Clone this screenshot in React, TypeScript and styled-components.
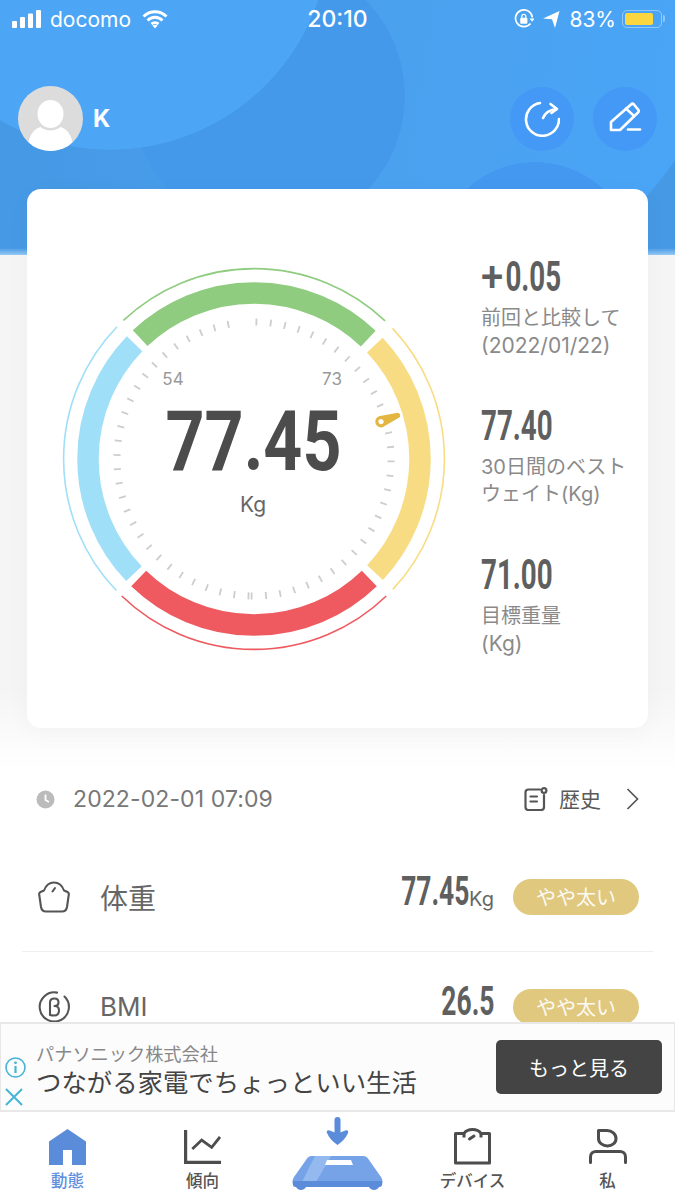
import styled, { createGlobalStyle } from "styled-components";

const GlobalStyle = createGlobalStyle`
  html, body {
    margin: 0;
    padding: 0;
    background: #fff;
    font-family: Inter, "Noto Sans CJK JP", sans-serif;
  }
`;

const CJK = `Inter, "Noto Sans CJK JP", sans-serif`;

const Screen = styled.div`
  width: 675px;
  height: 1200px;
  display: flex;
  flex-direction: column;
  overflow: hidden;
  background: #fff;
`;

const Main = styled.main`
  flex: 1;
  min-height: 0;
  background: linear-gradient(#f5f5f5 0, #f5f5f5 690px, #fff 770px);
`;

const Header = styled.header`
  height: 255px;
  background:
    linear-gradient(to bottom, rgba(170, 215, 250, 0) 248px, rgba(170, 215, 250, 0.8) 255px),
    radial-gradient(circle 220px at 110px -70px, #4ca6f5 99.7%, rgba(76, 166, 245, 0) 100%),
    radial-gradient(circle 137px at 268px 96px, #4499eb 99.7%, rgba(68, 153, 235, 0) 100%),
    radial-gradient(circle 100px at 535px 262px, #4498f0 99.7%, rgba(68, 152, 240, 0) 100%),
    radial-gradient(circle 385px at 360px -60px, rgba(70, 153, 228, 0) 99.7%, #4699e4 100%),
    linear-gradient(100deg, #4597e3 0%, #4aa1ee 55%, #4aa5f7 100%);
`;

const StatusBar = styled.div`
  height: 38px;
  display: grid;
  grid-template-columns: 1fr auto 1fr;
  align-items: center;
  padding: 0 12px;
  color: #fff;
  font-size: 21px;
`;

const StatusLeft = styled.div`
  display: flex;
  align-items: center;
  gap: 8px;
`;

const WifiSlot = styled.div`
  margin-left: 3px;
  display: flex;
`;

const StatusRight = styled.div`
  display: flex;
  align-items: center;
  justify-content: flex-end;
  gap: 9px;
`;

const Clock = styled.div`
  font-size: 23px;
  font-weight: 500;
`;

const Battery = styled.div`
  position: relative;
  width: 40px;
  height: 18px;
  box-sizing: border-box;
  border: 1.5px solid rgba(255, 255, 255, 0.4);
  border-radius: 5px;
  padding: 2px;
  margin: 0 1px 0 -3px;
  display: flex;

  &::after {
    content: "";
    position: absolute;
    right: -4px;
    top: 4px;
    width: 2px;
    height: 7px;
    border-radius: 0 2px 2px 0;
    background: rgba(255, 255, 255, 0.4);
  }
`;

const BatteryFill = styled.div`
  flex: 0 0 83%;
  background: #fbd63f;
  border-radius: 2px;
`;

const UserRow = styled.div`
  display: flex;
  align-items: center;
  margin-top: 48px;
  padding: 0 18px;
`;

const Avatar = styled.div`
  width: 65px;
  height: 65px;
  border-radius: 50%;
  background: #dcdcdc;
  overflow: hidden;
  flex: none;
`;

const UserName = styled.div`
  margin-left: 10px;
  flex: 1;
  color: #fff;
  font-size: 24px;
  font-weight: 700;
`;

const RoundButton = styled.div`
  width: 64px;
  height: 64px;
  border-radius: 50%;
  background: #4499f7;
  display: flex;
  align-items: center;
  justify-content: center;
  margin-left: 19px;
`;

const Card = styled.section`
  position: relative;
  width: 621px;
  height: 539px;
  box-sizing: border-box;
  margin: -66px 0 0 27px;
  padding: 70px 0 0 27px;
  background: #fff;
  border-radius: 14px;
  box-shadow: 0 6px 26px rgba(0, 0, 0, 0.03);
  display: flex;
`;

const GaugeSvg = styled.svg`
  width: 400px;
  height: 400px;
  flex: none;
  font-family: ${CJK};
`;

const GaugeValue = styled.text`
  font-family: Roboto, sans-serif;
  font-size: 84px;
  font-weight: 700;
  fill: #4c4c4c;
`;

const GaugeLabel = styled.text`
  font-size: 17px;
  fill: #999;
`;

const GaugeUnit = styled.text`
  font-size: 21px;
  fill: #666;
`;

const Stats = styled.div`
  margin-left: 27px;
  margin-top: -1px;
  display: flex;
  flex-direction: column;
  gap: 48px;
`;

const Stat = styled.div`
  display: flex;
  flex-direction: column;
`;

const StatValue = styled.div`
  height: 38px;
  line-height: 38px;
  font-family: Roboto, sans-serif;
  font-size: 42px;
  font-weight: 700;
  color: #5f5f5f;
  white-space: nowrap;
  transform: scaleX(0.66);
  transform-origin: left center;
`;

const PlusSign = styled.span`
  display: inline-block;
  width: 37px;
  font-weight: 500;
  transform: scaleX(1.45);
  transform-origin: left center;
`;

const StatCaption = styled.div`
  margin-top: 9px;
  display: flex;
  flex-direction: column;
`;

const CaptionLine = styled.div<{ $latin?: boolean }>`
  height: 27px;
  line-height: 27px;
  font-size: ${(p) => (p.$latin ? 21 : 20)}px;
  color: #8a8a8a;
  white-space: nowrap;
`;

const HistoryRow = styled.div`
  display: flex;
  align-items: center;
  height: 50px;
  margin-top: 46px;
  padding: 0 36px;
  font-size: 23px;
  letter-spacing: 0.1px;
  color: #777;
`;

const HistoryDate = styled.div`
  margin-left: 18px;
  flex: 1;
`;

const HistoryLink = styled.div`
  display: flex;
  align-items: center;
  color: #5a5a5a;
  font-size: 21px;
  letter-spacing: 0;
  gap: 11px;
`;

const HistoryLabel = styled.span`
  margin: 0 14px 3px 0;
`;

const Metrics = styled.div`
  margin: 18px 22px 0;
`;

const Metric = styled.div<{ $last?: boolean }>`
  height: 109px;
  display: flex;
  align-items: center;
  padding: 0 14px 0 16px;
  border-bottom: ${(p) => (p.$last ? "none" : "1px solid #eee")};
`;

const MetricIcon = styled.div`
  width: 32px;
  height: 34px;
  flex: none;
  display: flex;
  align-items: center;
  justify-content: center;
`;

const MetricName = styled.div<{ $size: number }>`
  margin-left: 30px;
  flex: 1;
  font-size: ${(p) => p.$size}px;
  color: #666;
`;

const MetricValue = styled.div`
  font-family: Roboto, sans-serif;
  font-size: 40px;
  line-height: 32px;
  font-weight: 700;
  color: #5f5f5f;
  margin-bottom: 9px;
  transform: scaleX(0.66);
  transform-origin: right center;
`;

const MetricUnit = styled.div`
  font-size: 20px;
  color: #666;
  margin-top: 4px;
`;

const Pill = styled.div`
  margin-left: 19px;
  width: 126px;
  height: 36px;
  border-radius: 18px;
  background: #e0c97f;
  color: rgba(255, 255, 255, 0.92);
  font-size: 20px;
  display: flex;
  align-items: center;
  justify-content: center;
`;

const AdBanner = styled.aside`
  position: relative;
  z-index: 1;
  flex: none;
  height: 90px;
  box-sizing: border-box;
  border: 2px solid #e8e8e8;
  border-left-width: 1px;
  border-right-width: 1px;
  background: #fcfcfc;
  display: flex;
  align-items: center;
  padding: 0 12px 0 3px;
`;

const AdMarks = styled.div`
  width: 32px;
  flex: none;
  align-self: stretch;
  display: flex;
  flex-direction: column;
  align-items: flex-start;
  justify-content: flex-end;
  gap: 10px;
  padding: 0 0 4px 1px;
  box-sizing: border-box;
`;

const AdText = styled.div`
  flex: 1;
  min-width: 0;
  padding-top: 6px;
`;

const AdSponsor = styled.div`
  font-size: 18.2px;
  line-height: 24px;
  color: #888;
`;

const AdTitle = styled.div`
  font-size: 25.4px;
  line-height: 33px;
  color: #444;
  white-space: nowrap;
`;

const AdButton = styled.div`
  width: 166px;
  height: 54px;
  border-radius: 5px;
  background: #444;
  color: #fff;
  font-size: 20px;
  display: flex;
  align-items: center;
  justify-content: center;
`;

const TabBar = styled.nav`
  position: relative;
  z-index: 1;
  flex: none;
  height: 88px;
  display: grid;
  grid-template-columns: repeat(5, 1fr);
  background: #fff;
`;

const Tab = styled.div<{ $active?: boolean }>`
  display: flex;
  flex-direction: column;
  align-items: center;
  padding-top: 15px;
  font-size: 16.5px;
  font-weight: 500;
  line-height: 22px;
  color: ${(p) => (p.$active ? "#5f92de" : "#555")};
`;

const TabIcon = styled.div`
  height: 39px;
  margin-bottom: 4px;
  display: flex;
  align-items: center;
  justify-content: center;
`;

const ScaleTab = styled.div`
  display: flex;
  align-items: flex-start;
  justify-content: center;
  padding-top: 5px;
`;

function polar(r: number, deg: number) {
  const a = (deg * Math.PI) / 180;
  return { x: 200 + r * Math.sin(a), y: 200 - r * Math.cos(a) };
}

function arc(r: number, from: number, to: number) {
  const s = polar(r, from);
  const e = polar(r, to);
  return `M${s.x.toFixed(2)} ${s.y.toFixed(2)}A${r} ${r} 0 0 1 ${e.x.toFixed(2)} ${e.y.toFixed(2)}`;
}

const segments = [
  { color: "#8fcc80", from: -43.3, to: 43.5 },
  { color: "#f8dc84", from: 46.7, to: 133.2 },
  { color: "#ee5a5f", from: 136, to: 224 },
  { color: "#a0dff8", from: 226.3, to: 314 },
];

const ticks = [
  ...Array.from({ length: 31 }, (_, k) => 1 + 6 * k).filter((d) => d !== 73),
  ...Array.from({ length: 29 }, (_, k) => 182.3 + 5.96 * k),
];

function Gauge() {
  return (
    <GaugeSvg viewBox="0 0 400 400">
      {segments.map((s) => (
        <g key={s.color} fill="none" stroke={s.color}>
          <path d={arc(166, s.from, s.to)} strokeWidth={21.5} />
          <path d={arc(190.4, s.from, s.to)} strokeWidth={1.6} />
        </g>
      ))}
      {ticks.map((d) => {
        const a = polar(133.5, d);
        const b = polar(140.5, d);
        return <line key={d} x1={a.x} y1={a.y} x2={b.x} y2={b.y} stroke="#cdcdcd" strokeWidth={1.8} />;
      })}
      <g transform="translate(327 162.6) rotate(69.7)">
        <path d="M-5.8 0L-2.7 -17.5A2.7 2.7 0 0 1 2.7 -17.5L5.8 0A5.8 5.8 0 0 1 -5.8 0Z" fill="#e3b641" />
        <circle r="2.6" fill="#fff" />
      </g>
      <GaugeLabel x={119} y={126} textAnchor="middle">54</GaugeLabel>
      <GaugeLabel x={278} y={126} textAnchor="middle">73</GaugeLabel>
      <GaugeValue transform="translate(199.5 210.5) scale(.81 1)" textAnchor="middle">77.45</GaugeValue>
      <GaugeUnit x={199} y={253} textAnchor="middle">Kg</GaugeUnit>
    </GaugeSvg>
  );
}

function SignalIcon() {
  return (
    <svg width="30" height="18" viewBox="0 0 30 18" fill="#fff">
      <rect x="0" y="11" width="5" height="7" rx="1" />
      <rect x="8" y="7" width="5" height="11" rx="1" />
      <rect x="16" y="3.5" width="5" height="14.5" rx="1" />
      <rect x="24" y="0" width="5" height="18" rx="1" />
    </svg>
  );
}

function WifiIcon() {
  return (
    <svg width="26" height="20" viewBox="0 0 26 20" fill="none" stroke="#fff" strokeWidth="3">
      <path d="M1.5 7.5C8 1 18 1 24.5 7.5" />
      <path d="M5.5 11.5C10 7.3 16 7.3 20.5 11.5" />
      <path d="M9.5 15C11.5 13.3 14.5 13.3 16.5 15" />
      <path d="M13 19.5L10.4 16.6C12 15.5 14 15.5 15.6 16.6Z" fill="#fff" stroke="none" />
    </svg>
  );
}

function RotationLockIcon() {
  return (
    <svg width="20" height="20" viewBox="0 0 20 20" fill="none" stroke="#fff" strokeWidth="1.7">
      <path d="M16.5 14.5A8.4 8.4 0 1 1 18.3 8.5" />
      <path d="M15.5 9.5h5.2l-2.6 3.2Z" fill="#fff" stroke="none" />
      <rect x="6.2" y="8.8" width="7.2" height="6" rx="1" fill="#fff" stroke="none" />
      <path d="M7.8 9V7.4a2 2 0 0 1 4 0V9" strokeWidth="1.3" />
    </svg>
  );
}

function ArrowIcon() {
  return (
    <svg width="17" height="17" viewBox="0 0 17 17" fill="#fff">
      <path d="M0 7.5L16.5 0L12 17L9 8.2Z" />
    </svg>
  );
}

function AvatarArt() {
  return (
    <svg width="65" height="65" viewBox="0 0 65 65" fill="#fff">
      <ellipse cx="32.5" cy="28" rx="13" ry="14" />
      <path d="M10 65C9 52 15 43 22.5 41C28 45.5 37 45.5 42.5 41C50 43 56 52 55 65Z" />
    </svg>
  );
}

function RefreshIcon() {
  return (
    <svg width="36" height="36" viewBox="0 0 36 36" fill="none" stroke="#fff" strokeWidth="2.6" strokeLinecap="round" strokeLinejoin="round">
      <path d="M16 2A16.5 16.5 0 1 0 35 18" />
      <path d="M19 17C21 12 25 9 32 8" />
      <path d="M26.5 3L33 8L27.5 12" />
    </svg>
  );
}

function EditIcon() {
  return (
    <svg width="34" height="34" viewBox="0 0 34 34" fill="none" stroke="#fff" strokeWidth="2.6" strokeLinecap="round" strokeLinejoin="round">
      <path d="M3 28V20L23 2.5C24 1.5 25 1.5 26 2.5L30 7.5C31 8.5 31 9.5 30 10.5L12 28Z" />
      <path d="M18 6.6L25 13" />
      <path d="M20 27.5H32" />
    </svg>
  );
}

function ClockDot() {
  return (
    <svg width="19" height="19" viewBox="0 0 19 19">
      <circle cx="9.5" cy="9.5" r="9" fill="#bbb" />
      <path d="M9.5 4.5V10L13 12" fill="none" stroke="#fff" strokeWidth="1.8" />
    </svg>
  );
}

function HistoryIcon() {
  return (
    <svg width="24" height="24" viewBox="0 0 24 24" fill="none" stroke="#555" strokeWidth="2.2" strokeLinecap="round">
      <path d="M16 2.5H4.5C2.5 2.5 1.5 3.5 1.5 5.5V20C1.5 22 2.5 23 4.5 23H17C19 23 20 22 20 20V8" />
      <path d="M6.5 9.5H13M6.5 14.5H13" />
      <circle cx="20" cy="3.5" r="2.4" />
    </svg>
  );
}

function ChevronIcon() {
  return (
    <svg width="13" height="22" viewBox="0 0 13 22" fill="none" stroke="#555" strokeWidth="1.7">
      <path d="M1.5 1L11.5 11L1.5 21" />
    </svg>
  );
}

function WeightIcon() {
  return (
    <svg width="32" height="32" viewBox="0 0 32 32" fill="none" stroke="#555" strokeWidth="2.1" strokeLinecap="round" strokeLinejoin="round">
      <path d="M6 9.5C8 4 12 1.5 16 1.5C20 1.5 24 4 26 9.5L29.5 11C30.5 11.5 31 12.5 30.8 13.5L29 26C28.5 29 27 30.5 24 30.5H8C5 30.5 3.5 29 3 26L1.2 13.5C1 12.5 1.5 11.5 2.5 11Z" />
      <path d="M14.5 10.5L17 7" />
    </svg>
  );
}

function BmiIcon() {
  return (
    <svg width="32" height="32" viewBox="0 0 32 32" fill="none" stroke="#555" strokeWidth="2.1" strokeLinecap="round" strokeLinejoin="round">
      <path d="M19 1.6A14.6 14.6 0 1 0 26.5 5.5" />
      <path d="M12 24V11.5C12 9 14 7.5 16.5 7.5C19 7.5 20.5 9 20.5 11.5C20.5 13.8 19 15 16.5 15C19.5 15 21 16.5 21 19.5C21 22.5 19 24.5 16 24.5C14 24.5 12 24 12 24Z" />
    </svg>
  );
}

function InfoIcon() {
  return (
    <svg width="21" height="21" viewBox="0 0 21 21" fill="none" stroke="#45b4d6" strokeWidth="1.6">
      <circle cx="10.5" cy="10.5" r="9.5" />
      <path d="M10.5 9V16" strokeWidth="2.2" />
      <circle cx="10.5" cy="5.8" r="1.4" fill="#45b4d6" stroke="none" />
    </svg>
  );
}

function CloseIcon() {
  return (
    <svg width="18" height="18" viewBox="0 0 18 18" fill="none" stroke="#45b4d6" strokeWidth="2">
      <path d="M1 1L17 17M17 1L1 17" />
    </svg>
  );
}

function HomeIcon() {
  return (
    <svg width="37" height="36" viewBox="0 0 37 36" fill="#5b8cd9">
      <path d="M18.5 0L37 12.5V36H23V21H14V36H0V12.5Z" />
    </svg>
  );
}

function TrendIcon() {
  return (
    <svg width="37" height="34" viewBox="0 0 37 34" fill="none" stroke="#4d4d4d" strokeWidth="3.2">
      <path d="M1.6 0V32.4H37" />
      <path d="M8.3 19L17.7 10L27.7 17.3L36 7" strokeWidth="2.8" />
    </svg>
  );
}

function BagIcon() {
  return (
    <svg width="37" height="37" viewBox="0 0 37 37" fill="none" stroke="#4d4d4d" strokeWidth="3" strokeLinejoin="round">
      <path d="M1.5 5.5H10C12 2.5 15 1.5 18.5 1.5C22 1.5 25 2.5 27 5.5H35.5V35H1.5Z" />
      <path d="M10 5.5V9.5M27 5.5V9.5" />
      <path d="M15.5 11L20 8" strokeLinecap="round" />
    </svg>
  );
}

function PersonIcon() {
  return (
    <svg width="38" height="35" viewBox="0 0 38 35" fill="none" stroke="#4d4d4d" strokeWidth="3" strokeLinecap="round" strokeLinejoin="round">
      <path d="M9.5 1.5H18C23 1.5 27 5 27 9.5C27 14 23 17 18.5 17C14 17 9.5 14 9.5 9.5Z" />
      <path d="M1.5 33.5V28C1.5 24.5 4 22.5 7 22.5H31C34 22.5 36.5 24.5 36.5 28V33.5" />
    </svg>
  );
}

function ScaleArt() {
  return (
    <svg width="94" height="76" viewBox="0 0 94 76">
      <path d="M46.5 3V15" stroke="#5b8cd9" strokeWidth="6" strokeLinecap="round" fill="none" />
      <path d="M36 16C35 13.5 37 12.5 40 14L46.5 16.5L53 14C56 12.5 58 13.5 57 16C55 21 51 25 46.5 28C42 25 38 21 36 16Z" fill="#5b8cd9" />
      <path d="M15 43C16 41 18 39 21 39H72C75 39 77 41 78 43L90 60C92 63 92 66 90 68H3C1 66 1 63 3 60Z" fill="#76a3e8" />
      <path d="M24 39H40L25 65H11Z" fill="#94b9ee" />
      <path d="M2 64H91C92 69 90 70 88 70C86 74 80 74 78 70H15C13 74 7 74 5 70C3 70 1 69 2 64Z" fill="#5b8cd9" />
      <path d="M36 43H60L62 48H34Z" fill="#fff" />
    </svg>
  );
}

export default function App() {
  return (
    <>
      <GlobalStyle />
      <Screen>
        <Main>
          <Header>
            <StatusBar>
              <StatusLeft>
                <SignalIcon />
                <span>docomo</span>
                <WifiSlot>
                  <WifiIcon />
                </WifiSlot>
              </StatusLeft>
              <Clock>20:10</Clock>
              <StatusRight>
                <RotationLockIcon />
                <ArrowIcon />
                <span>83%</span>
                <Battery>
                  <BatteryFill />
                </Battery>
              </StatusRight>
            </StatusBar>
            <UserRow>
              <Avatar>
                <AvatarArt />
              </Avatar>
              <UserName>K</UserName>
              <RoundButton>
                <RefreshIcon />
              </RoundButton>
              <RoundButton>
                <EditIcon />
              </RoundButton>
            </UserRow>
          </Header>
          <Card>
            <Gauge />
            <Stats>
              <Stat>
                <StatValue>
                  <PlusSign>+</PlusSign>0.05
                </StatValue>
                <StatCaption>
                  <CaptionLine>前回と比較して</CaptionLine>
                  <CaptionLine $latin>(2022/01/22)</CaptionLine>
                </StatCaption>
              </Stat>
              <Stat>
                <StatValue>77.40</StatValue>
                <StatCaption>
                  <CaptionLine>30日間のベスト</CaptionLine>
                  <CaptionLine>ウェイト(Kg)</CaptionLine>
                </StatCaption>
              </Stat>
              <Stat>
                <StatValue>71.00</StatValue>
                <StatCaption>
                  <CaptionLine>目標重量</CaptionLine>
                  <CaptionLine $latin>(Kg)</CaptionLine>
                </StatCaption>
              </Stat>
            </Stats>
          </Card>
          <HistoryRow>
            <ClockDot />
            <HistoryDate>2022-02-01 07:09</HistoryDate>
            <HistoryLink>
              <HistoryIcon />
              <HistoryLabel>歴史</HistoryLabel>
              <ChevronIcon />
            </HistoryLink>
          </HistoryRow>
          <Metrics>
            <Metric>
              <MetricIcon>
                <WeightIcon />
              </MetricIcon>
              <MetricName $size={28}>体重</MetricName>
              <MetricValue>77.45</MetricValue>
              <MetricUnit>Kg</MetricUnit>
              <Pill>やや太い</Pill>
            </Metric>
            <Metric $last>
              <MetricIcon>
                <BmiIcon />
              </MetricIcon>
              <MetricName $size={26}>BMI</MetricName>
              <MetricValue>26.5</MetricValue>
              <Pill>やや太い</Pill>
            </Metric>
          </Metrics>
        </Main>
        <AdBanner>
          <AdMarks>
            <InfoIcon />
            <CloseIcon />
          </AdMarks>
          <AdText>
            <AdSponsor>パナソニック株式会社</AdSponsor>
            <AdTitle>つながる家電でちょっといい生活</AdTitle>
          </AdText>
          <AdButton>もっと見る</AdButton>
        </AdBanner>
        <TabBar>
          <Tab $active>
            <TabIcon>
              <HomeIcon />
            </TabIcon>
            動態
          </Tab>
          <Tab>
            <TabIcon>
              <TrendIcon />
            </TabIcon>
            傾向
          </Tab>
          <ScaleTab>
            <ScaleArt />
          </ScaleTab>
          <Tab>
            <TabIcon>
              <BagIcon />
            </TabIcon>
            デバイス
          </Tab>
          <Tab>
            <TabIcon>
              <PersonIcon />
            </TabIcon>
            私
          </Tab>
        </TabBar>
      </Screen>
    </>
  );
}
